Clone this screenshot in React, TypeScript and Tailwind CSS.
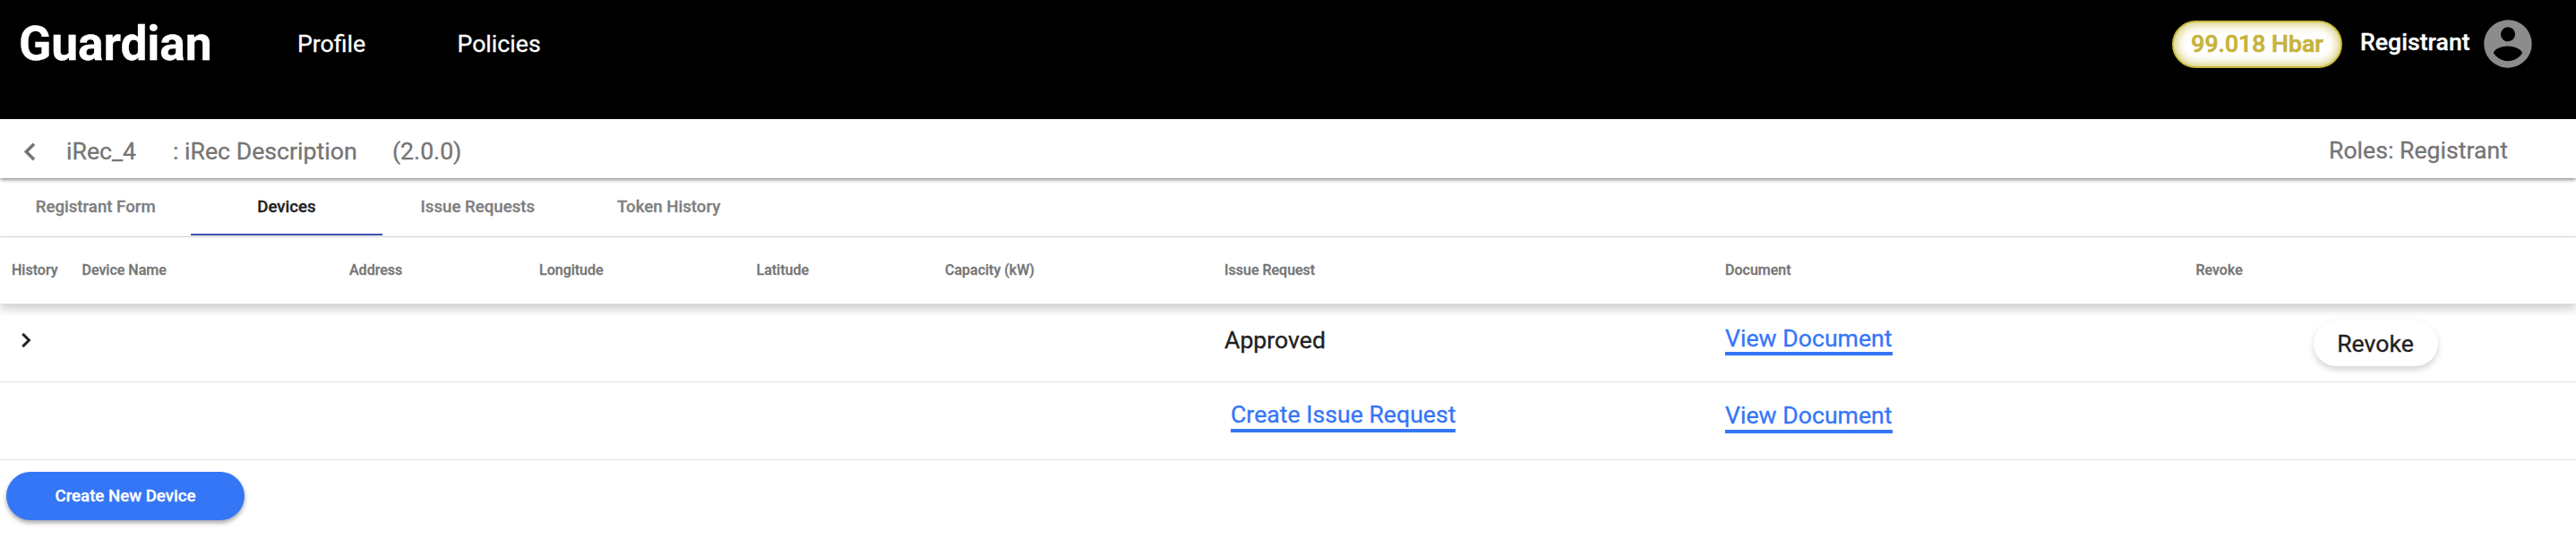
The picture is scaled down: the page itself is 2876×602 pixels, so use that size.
import React from "react";

const columns = ["History", "Device Name", "Address", "Longitude", "Latitude", "Capacity (kW)", "Issue Request", "Document", "Revoke"];
const grid = "grid grid-cols-[78.5px_298.5px_212px_242.5px_210.5px_312px_559px_525.5px_1fr] pl-[13px]";

function Link({ children, className = "" }: { children: React.ReactNode; className?: string }) {
  return (
    <a className={`block w-fit border-b-4 border-[#3576f6] leading-[30px] text-[#3576f6] ${className}`}>{children}</a>
  );
}

function Chevron({ className, d }: { className: string; d: string }) {
  return (
    <svg viewBox="0 0 24 24" className={className} fill="currentColor">
      <path d={d} />
    </svg>
  );
}

export default function App() {
  return (
    <div className="h-[602px] w-[2876px] overflow-hidden bg-white font-['Roboto',sans-serif] text-[26.67px] text-[#212121] [-webkit-text-stroke:0.3px]">
      <header className="flex h-[133px] items-start bg-black text-white">
        <div className="ml-[21px] mt-[18px] w-[311px] text-[53.33px] font-bold leading-[62px] tracking-[-0.1px]">Guardian</div>
        <nav className="mt-[34px] flex leading-[30px]">
          <a className="w-[178.5px]">Profile</a>
          <a>Policies</a>
        </nav>
        <div className="ml-auto flex items-start pr-[44px]">
          <div className="mt-[23px] flex h-[53px] w-[190px] items-center justify-center rounded-full border-2 border-[#c7b93d] bg-white pb-[2px] font-medium text-[#c7b33c] shadow-[inset_0_0_13px_#c7b93d] [-webkit-text-stroke:0.7px]">
            99.018 Hbar
          </div>
          <div className="ml-[20px] mt-[32px] w-[133px] font-medium leading-[30px]">Registrant</div>
          <svg viewBox="0 0 24 24" className="mt-[17px] size-[64px]" fill="#8c8c8c">
            <path d="M12 2C6.48 2 2 6.48 2 12s4.48 10 10 10 10-4.48 10-10S17.52 2 12 2zm0 3c1.66 0 3 1.34 3 3s-1.34 3-3 3-3-1.34-3-3 1.34-3 3-3zm0 14.2c-2.5 0-4.71-1.28-6-3.22.03-1.99 4-3.08 6-3.08 1.99 0 5.97 1.09 6 3.08-1.29 1.94-3.5 3.22-6 3.22z" />
          </svg>
        </div>
      </header>

      <div className="relative flex h-[66px] items-center bg-white text-[#757575] shadow-[0_1px_5px_rgba(0,0,0,0.6)]">
        <Chevron className="ml-[14px] mt-[6px] size-[39px] stroke-current stroke-[0.3]" d="M15.41 7.41L14 6l-6 6 6 6 1.41-1.41L10.83 12z" />
        <span className="ml-[21px] mt-[5px] w-[119px] leading-[30px]">iRec_4</span>
        <span className="mt-[5px] w-[245px] leading-[30px]">: iRec Description</span>
        <span className="mt-[5px] leading-[30px]">(2.0.0)</span>
        <span className="ml-auto mr-[76px] mt-[3px] leading-[30px]">Roles: Registrant</span>
      </div>

      <div className="flex h-[66px] border-b border-[#dcdcdc] text-[18.67px] font-medium text-[#7f7f7f]">
        {["Registrant Form", "Devices", "Issue Requests", "Token History"].map((t) => (
          <div
            key={t}
            className={`flex h-[64px] w-[213.33px] justify-center pt-[21px] leading-[22px] ${t === "Devices" ? "border-b-2 border-[#3f51b5] text-[#212121]" : ""}`}
          >
            {t}
          </div>
        ))}
      </div>

      <div className={`${grid} relative h-[75px] border-b border-[#e0e0e0] pt-[27px] text-[16px] font-medium leading-[20px] text-[#757575] shadow-[0_5px_10px_rgba(0,0,0,0.2)]`}>
        {columns.map((c) => (
          <div key={c}>{c}</div>
        ))}
      </div>

      <div className={`${grid} h-[87px] border-b border-[#e0e0e0]`}>
        <Chevron className="mt-[24px] size-[32px] stroke-current stroke-[0.3]" d="M8.59 16.59L13.17 12 8.59 7.41 10 6l6 6-6 6-1.41-1.41z" />
        <div className="col-start-7 mt-[25px] leading-[30px]">Approved</div>
        <Link className="mt-[23px] h-[34px]">View Document</Link>
        <button className="ml-[131px] mt-[18px] h-[51px] w-[139px] rounded-full bg-white leading-[30px] shadow-[0_4px_7px_rgba(0,0,0,0.17)]">
          Revoke
        </button>
      </div>

      <div className={`${grid} h-[87px] border-b border-[#e0e0e0]`}>
        <Link className="col-start-7 ml-[7px] mt-[21px] h-[35px]">Create Issue Request</Link>
        <Link className="mt-[22px] h-[35px]">View Document</Link>
      </div>

      <button className="ml-[7px] mt-[13px] h-[54px] w-[266px] rounded-full bg-[#3576f6] text-[18.67px] font-medium text-white shadow-[0_3px_5px_rgba(0,0,0,0.35)]">
        Create New Device
      </button>
    </div>
  );
}
